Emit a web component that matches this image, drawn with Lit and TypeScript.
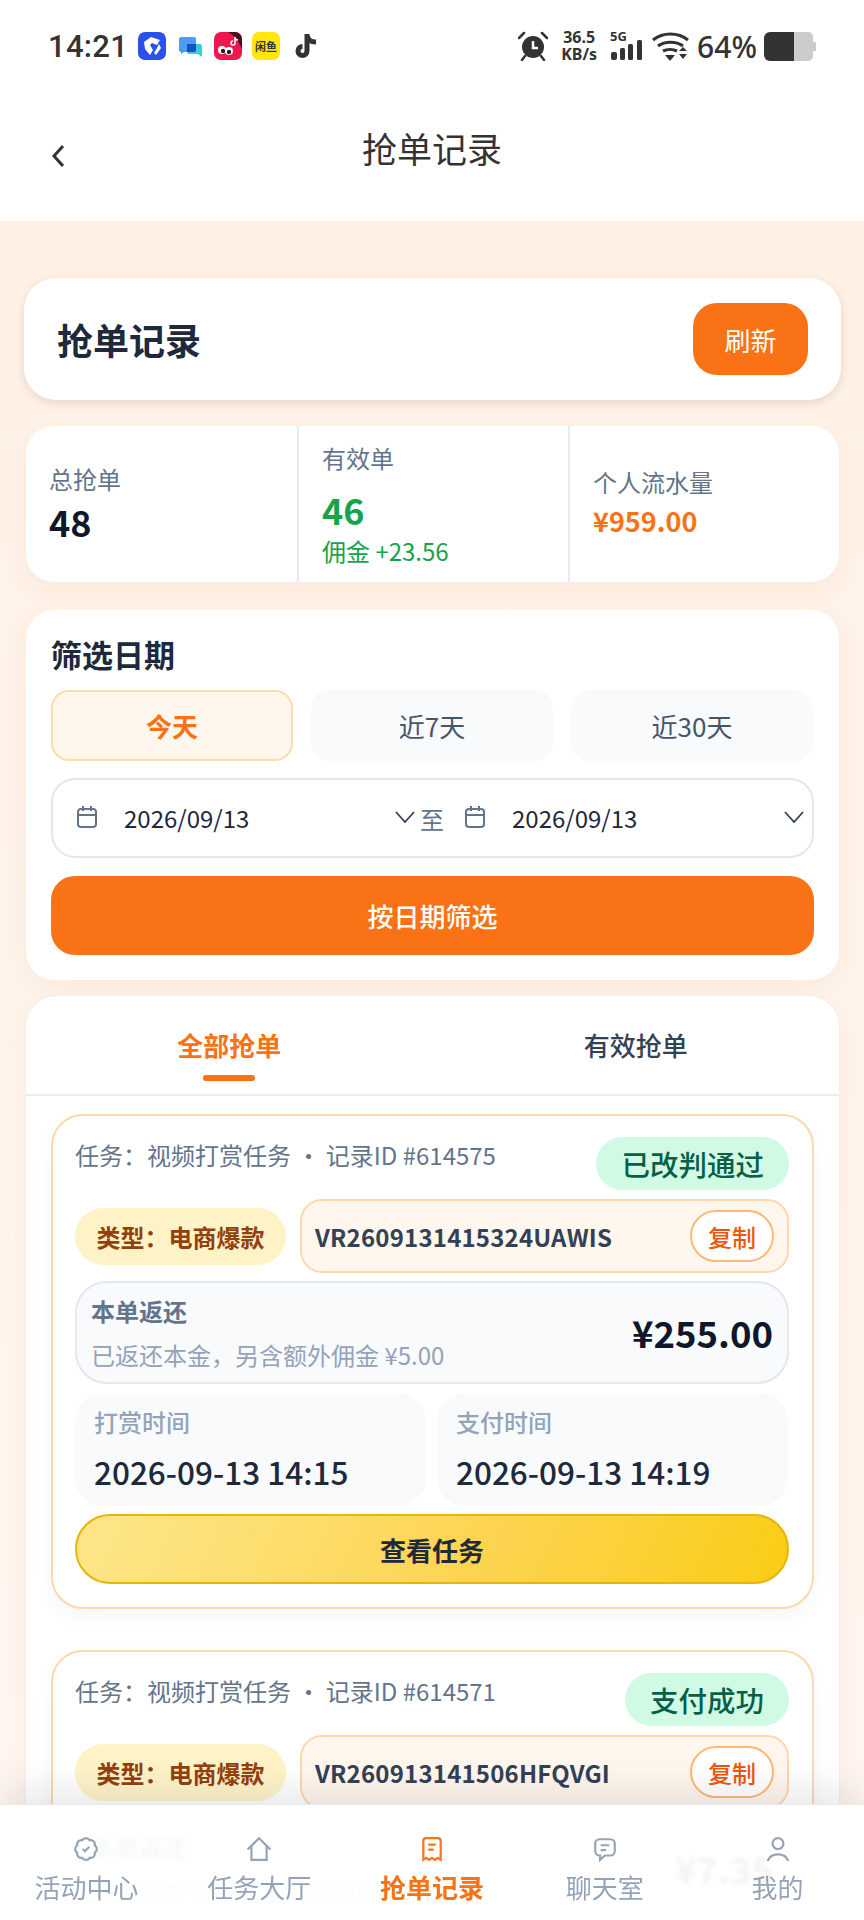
import { LitElement, css, html, svg } from "lit";
import { customElement } from "lit/decorators.js";

const orders = [
  {
    id: "614575",
    status: "已改判通过",
    no: "VR2609131415324UAWIS",
    note: "已返还本金，另含额外佣金 ¥5.00",
    amount: "¥255.00",
    paidAt: "2026-09-13 14:15",
    doneAt: "2026-09-13 14:19",
  },
  {
    id: "614571",
    status: "支付成功",
    no: "VR260913141506HFQVGI",
    note: "已返还本金，另含额外佣金 ¥0.35",
    amount: "¥7.35",
    paidAt: "2026-09-13 14:15",
    doneAt: "2026-09-13 14:16",
  },
];

const tabIcons = {
  badge: svg`<path d="M3.85 8.62a4 4 0 0 1 4.78-4.77 4 4 0 0 1 6.74 0 4 4 0 0 1 4.78 4.78 4 4 0 0 1 0 6.74 4 4 0 0 1-4.77 4.78 4 4 0 0 1-6.75 0 4 4 0 0 1-4.78-4.77 4 4 0 0 1 0-6.76Z"/><path d="m9 12 2 2 4-4"/>`,
  home: svg`<path d="M1.5 12.5 12 2l10.500 10.500"/><path d="M5 9v13h14V9"/>`,
  receipt: svg`<path d="M4 4.500A2.500 2.500 0 0 1 6.500 2h11A2.500 2.500 0 0 1 20 4.500V22l-2.700-1.800L14.700 22 12 20.200 9.300 22l-2.600-1.800L4 22Z"/><path d="M8.500 8h7M8.500 12.500h5"/>`,
  chat: svg`<path d="M7 3h10a4 4 0 0 1 4 4v7a4 4 0 0 1-4 4h-5l-4.500 4v-4H7a4 4 0 0 1-4-4V7a4 4 0 0 1 4-4Z"/><path d="M8 8.500h8M8 13h5"/>`,
  user: svg`<circle cx="12" cy="7" r="5"/><path d="M2.500 23c1.500-4 5-6 9.500-6s8 2 9.500 6"/>`,
};

const tabs = [
  { label: "活动中心", icon: tabIcons.badge },
  { label: "任务大厅", icon: tabIcons.home },
  { label: "抢单记录", icon: tabIcons.receipt, active: true },
  { label: "聊天室", icon: tabIcons.chat },
  { label: "我的", icon: tabIcons.user },
];

const calendar = html`<svg class="cal" viewBox="0 0 22 24" fill="none" stroke="currentColor" stroke-width="2">
  <rect x="2" y="4" width="18" height="18" rx="3" /><path d="M2 10h18M7 1v5M15 1v5" />
</svg>`;

const chevron = html`<svg class="chev" viewBox="0 0 20 12" fill="none" stroke="currentColor" stroke-width="1.800">
  <path d="M1 1l9 10 9-10" />
</svg>`;

@customElement("app-root")
export class AppRoot extends LitElement {
  static styles = css`
    :host {
      display: block;
      position: relative;
      width: 864px;
      height: 1920px;
      overflow: hidden;
      font-family: "Noto Sans CJK SC", "Noto Sans", sans-serif;
      background: linear-gradient(180deg, #fef0e4 0%, #fff3e9 50%, #fff6f0 100%);
      color: #1f2937;
    }
    * {
      box-sizing: border-box;
    }
    .top {
      background: #fff;
      height: 221px;
    }
    .status {
      height: 70px;
      padding: 22px 48px 0 48px;
      display: flex;
      align-items: center;
      color: #333;
    }
    .clock {
      font-family: Roboto, sans-serif;
      font-size: 31px;
      font-weight: 500;
      width: 90px;
      letter-spacing: 0.3px;
    }
    .apps {
      display: flex;
      align-items: center;
      gap: 10px;
    }
    .app {
      width: 28px;
      height: 28px;
      display: block;
    }
    .xianyu {
      width: 28px;
      height: 28px;
      border-radius: 7px;
      background: #ffe60f;
      color: #333;
      font-size: 11px;
      font-weight: 700;
      line-height: 28px;
      text-align: center;
      white-space: nowrap;
      overflow: hidden;
    }
    .sys {
      margin-left: auto;
      display: flex;
      align-items: center;
    }
    .speed {
      width: 36px;
      margin: 0 13px 0 13px;
      font-family: "Noto Sans", sans-serif;
      font-size: 16px;
      font-weight: 700;
      line-height: 17px;
      text-align: center;
      white-space: nowrap;
    }
    .signal {
      position: relative;
      width: 34px;
      height: 30px;
    }
    .signal span {
      position: absolute;
      left: 0;
      top: -4px;
      font-family: "Noto Sans", sans-serif;
      font-size: 13px;
      font-weight: 700;
    }
    .pct {
      font-family: "Noto Sans", sans-serif;
      font-size: 30px;
      font-weight: 500;
      margin: 0 7px 0 8px;
      white-space: nowrap;
    }
    .nav {
      height: 151px;
      display: grid;
      grid-template-columns: 1fr auto 1fr;
      align-items: center;
      padding: 0 51px;
    }
    .nav h1 {
      margin: 4px 0 0;
      font-size: 35px;
      font-weight: 400;
      line-height: 50px;
      color: #333;
    }
    .back {
      width: 14px;
      height: 24px;
      margin-top: 20px;
      display: block;
    }
    .page {
      padding: 57px 25px 0 26px;
    }
    .card {
      background: #fff;
      border-radius: 28px;
      box-shadow: 0 8px 24px rgba(180, 110, 50, 0.06);
    }
    .head {
      margin: 0 -2px 26px -2px;
      height: 122px;
      display: flex;
      align-items: center;
      justify-content: space-between;
      padding: 0 33px 0 33px;
      border-radius: 32px;
      box-shadow: 0 3px 10px rgba(120, 70, 30, 0.16);
    }
    .head h2 {
      margin: 0;
      font-size: 36px;
      font-weight: 700;
      color: #1e293b;
    }
    .refresh {
      width: 115px;
      height: 72px;
      border-radius: 24px;
      background: #f97316;
      color: #fff;
      font-size: 26px;
      display: flex;
      align-items: center;
      justify-content: center;
    }
    .stats {
      height: 156px;
      display: grid;
      grid-template-columns: 271px 271px 1fr;
      margin-bottom: 28px;
    }
    .stat {
      display: flex;
      flex-direction: column;
      justify-content: center;
      padding-left: 23px;
      border-left: 2px solid #e8eaee;
    }
    .stat:first-child {
      border-left: 0;
    }
    .stat .k {
      font-size: 24px;
      line-height: 34px;
      color: #64748b;
    }
    .stat .v {
      font-size: 36px;
      font-weight: 700;
      line-height: 50px;
      color: #0f172a;
    }
    .stat.good .k {
      margin-bottom: 10px;
    }
    .stat.good .v {
      color: #16a34a;
      line-height: 49px;
    }
    .stat.good .sub {
      font-size: 24px;
      line-height: 34px;
      color: #16a34a;
    }
    .stat .v.money {
      font-size: 27px;
      line-height: 44px;
      color: #f97316;
    }
    .filter {
      padding: 22px 25px 25px;
      margin-bottom: 15px;
    }
    .filter h3 {
      margin: 0 0 14px;
      font-size: 31px;
      font-weight: 700;
      line-height: 44px;
      color: #1e293b;
    }
    .presets {
      display: grid;
      grid-template-columns: repeat(3, 242px);
      gap: 18px;
      margin-bottom: 17px;
    }
    .preset {
      height: 71px;
      border-radius: 18px;
      background: #f8fafc;
      color: #475569;
      font-size: 26px;
      display: flex;
      align-items: center;
      justify-content: center;
    }
    .preset.on {
      background: #fff7ed;
      border: 2px solid #fbdcae;
      color: #f97316;
      font-weight: 700;
    }
    .dates {
      height: 80px;
      border: 2px solid #e5e7eb;
      border-radius: 24px;
      display: grid;
      grid-template-columns: 362px 29px 1fr;
      align-items: center;
      padding: 0 8px 2px 0;
      margin-bottom: 18px;
    }
    .date {
      display: flex;
      align-items: center;
      font-size: 24px;
      color: #1e293b;
      padding-left: 23px;
    }
    .date.end {
      padding-left: 20px;
    }
    .cal {
      width: 22px;
      height: 24px;
      color: #64748b;
      margin-right: 26px;
      flex: none;
    }
    .chev {
      width: 20px;
      height: 12px;
      margin-left: auto;
      color: #334155;
    }
    .to {
      font-size: 24px;
      color: #64748b;
      text-align: right;
      margin-top: 2px;
    }
    .apply {
      height: 79px;
      border-radius: 24px;
      background: #f97316;
      color: #fff;
      font-size: 26px;
      font-weight: 500;
      display: flex;
      align-items: center;
      justify-content: center;
    }
    .list {
      padding: 0 25px;
      border: 1px solid #edf0f5;
      border-bottom: 0;
      margin: 0 -1px 0 -1px;
      border-radius: 32px 32px 0 0;
    }
    .list-tabs {
      margin: 0 -25px 18px;
      height: 100px;
      display: grid;
      grid-template-columns: 1fr 1fr;
      border-bottom: 2px solid #e8ebf0;
    }
    .list-tab {
      display: flex;
      flex-direction: column;
      align-items: center;
      padding-top: 29px;
      font-size: 26px;
      font-weight: 500;
      line-height: 40px;
      color: #334155;
    }
    .list-tab.on {
      color: #f97316;
      font-weight: 700;
    }
    .list-tab.on::after {
      content: "";
      width: 52px;
      height: 6px;
      border-radius: 3px;
      background: #f97316;
      margin-top: 10px;
    }
    .order {
      border: 2px solid #fbd9ad;
      border-radius: 32px;
      padding: 21px 23px 23px 22px;
      margin-bottom: 41px;
      background: #fff;
      box-shadow: 0 8px 20px rgba(15, 23, 42, 0.04);
    }
    .row1 {
      display: flex;
      align-items: flex-start;
      justify-content: space-between;
      margin-bottom: 9px;
    }
    .meta {
      font-size: 24px;
      line-height: 36px;
      color: #64748b;
      white-space: nowrap;
    }
    .state {
      height: 53px;
      padding: 0 25px;
      border-radius: 27px;
      background: #d1fae5;
      color: #065f46;
      font-size: 28.500px;
      font-weight: 500;
      display: flex;
      align-items: center;
    }
    .row2 {
      display: flex;
      align-items: center;
      gap: 14px;
      margin-bottom: 8px;
    }
    .type {
      flex: none;
      width: 211px;
      height: 57px;
      border-radius: 29px;
      background: #fef3c7;
      color: #92400e;
      font-size: 24px;
      font-weight: 700;
      display: flex;
      align-items: center;
      justify-content: center;
      white-space: nowrap;
    }
    .no-box {
      flex: 1;
      height: 74px;
      border: 2px solid #fed7aa;
      border-radius: 22px;
      background: #fff7ed;
      display: flex;
      align-items: center;
      justify-content: space-between;
      padding: 0 13px;
    }
    .no {
      font-size: 24px;
      font-weight: 700;
      letter-spacing: 0.2px;
      color: #334155;
    }
    .copy {
      width: 84px;
      height: 52px;
      border: 2px solid #fdba74;
      border-radius: 26px;
      background: #fff;
      color: #ea580c;
      font-size: 24px;
      font-weight: 500;
      display: flex;
      align-items: center;
      justify-content: center;
    }
    .back-box {
      height: 103px;
      border: 2px solid #e2e8f0;
      border-radius: 32px;
      background: #f8fafc;
      display: flex;
      align-items: center;
      justify-content: space-between;
      padding: 0 14px;
      margin-bottom: 9px;
    }
    .back-box b {
      display: block;
      font-size: 24px;
      font-weight: 700;
      line-height: 34px;
      color: #64748b;
      margin-bottom: 10px;
    }
    .back-box small {
      display: block;
      font-size: 24px;
      line-height: 34px;
      color: #94a3b8;
    }
    .amount {
      font-size: 36.500px;
      font-weight: 700;
      color: #0f172a;
    }
    .times {
      display: grid;
      grid-template-columns: 351px 351px;
      gap: 11px;
      margin-bottom: 8px;
    }
    .time {
      height: 113px;
      border-radius: 28px;
      background: #f8fafc;
      padding: 11px 19px;
    }
    .time .k {
      font-size: 24px;
      font-weight: 500;
      line-height: 36px;
      color: #94a3b8;
      margin-bottom: 13px;
    }
    .time .v {
      font-size: 31.500px;
      font-weight: 500;
      line-height: 36px;
      color: #1e293b;
      white-space: nowrap;
    }
    .view {
      height: 70px;
      border: 2px solid #eab308;
      border-radius: 35px;
      background: linear-gradient(115deg, #fde68a 0%, #fcd34d 60%, #facc15 100%);
      color: #1f2937;
      font-size: 26px;
      font-weight: 700;
      display: flex;
      align-items: center;
      justify-content: center;
    }
    .tabbar {
      position: absolute;
      left: 0;
      right: 0;
      bottom: 0;
      height: 116px;
      display: grid;
      grid-template-columns: repeat(5, 1fr);
      background: rgba(255, 255, 255, 0.95);
      backdrop-filter: blur(2px);
      border-top: 1px solid #e7e9ee;
      box-shadow: 0 -12px 36px rgba(15, 23, 42, 0.1);
      padding-top: 31px;
    }
    .tab {
      display: flex;
      flex-direction: column;
      align-items: center;
      color: #94a3b8;
      font-size: 26px;
      line-height: 36px;
    }
    .tab svg {
      width: 26px;
      height: 26px;
      margin-bottom: 7px;
    }
    .tab.on {
      color: #f97316;
      font-weight: 700;
    }
  `;

  renderStatus() {
    return html`<div class="status">
      <div class="clock">14:21</div>
      <div class="apps">
        <svg class="app" viewBox="0 0 28 28">
          <rect width="28" height="28" rx="7" fill="#2a50ee" />
          <path d="M6 10l7-5 9 3-3 5-5-2-2 2 3 5-3 5-5-6zM21 12l2 4-5 7-2-2 3-5z" fill="#fff" />
        </svg>
        <svg class="app" viewBox="0 0 28 28">
          <rect width="28" height="28" rx="6" fill="#fff" />
          <path d="M3 7a2 2 0 0 1 2-2h13a2 2 0 0 1 2 2v11a2 2 0 0 1-2 2H8l-3 2v-2a2 2 0 0 1-2-2z" fill="#4a9cf5" />
          <path d="M11 12h13a2 2 0 0 1 2 2v11l-4-3H13a2 2 0 0 1-2-2z" fill="#2fd0e0" />
          <path d="M11 12h9v6a2 2 0 0 1-2 2h-7z" fill="#1c4fc4" />
        </svg>
        <svg class="app" viewBox="0 0 28 28">
          <rect width="28" height="28" rx="7" fill="#f0164f" />
          <path d="M14 0h7a7 7 0 0 1 7 7v10C24 8 20 3 14 0z" fill="#4a1020" />
          <circle cx="8" cy="18" r="4" fill="#fff" /><circle cx="15" cy="19" r="4" fill="#fff" />
          <circle cx="9" cy="19" r="2.200" fill="#222" /><circle cx="15" cy="20" r="2.200" fill="#222" />
          <path d="M21 5v6a2 2 0 1 1-2-2M21 5c0 2 1 3 3 3" fill="none" stroke="#fff" stroke-width="1.500" />
        </svg>
        <div class="xianyu">闲鱼</div>
        <svg class="app" style="margin-left:2px" viewBox="0 0 26 28">
          <path
            d="M14 2v17a4.500 4.500 0 1 1-4.500-4.500M14 2c0 5 3 8 9 8"
            fill="none"
            stroke="#333"
            stroke-width="5"
          />
        </svg>
      </div>
      <div class="sys">
        <svg width="30" height="30" viewBox="0 0 30 30">
          <circle cx="15" cy="16" r="11" fill="#333" />
          <path d="M15 10v7h5" fill="none" stroke="#fff" stroke-width="2.500" />
          <path
            d="M1 7l5-5M29 7l-5-5M7 25l-3 4M23 25l3 4"
            fill="none"
            stroke="#333"
            stroke-width="2.500"
            stroke-linecap="round"
          />
        </svg>
        <div class="speed">36.5<br />KB/s</div>
        <div class="signal">
          <span>5G</span>
          <svg width="34" height="30" viewBox="0 0 34 30">
            <g fill="#333">
              <rect x="1" y="21" width="6" height="8" rx="2" />
              <rect x="10" y="17" width="5" height="12" rx="1.500" />
              <rect x="18" y="13" width="5" height="16" rx="1.500" />
              <rect x="27" y="9" width="5" height="20" rx="1.500" />
            </g>
          </svg>
        </div>
        <svg style="margin-left:8px" width="37" height="30" viewBox="0 0 37 30">
          <g fill="none" stroke="#333" stroke-width="3.200">
            <path d="M1 9c10-8 25-8 35 0" />
            <path d="M6 15c7-5 18-5 25 0" />
            <path d="M11 20c4-2 10-2 14 0" />
          </g>
          <path d="M13 24h10l-5 6zM27 20h8l-4-4zM27 23h8l-4 5z" fill="#333" />
        </svg>
        <div class="pct">64%</div>
        <svg width="52" height="29" viewBox="0 0 52 29">
          <path d="M36 0h8a5 5 0 0 1 5 5v5h3v9h-3v5a5 5 0 0 1-5 5h-8z" fill="#ccc" />
          <path d="M6 0h24v29H6a6 6 0 0 1-6-6V6a6 6 0 0 1 6-6z" fill="#333" />
          <rect x="30" width="6" height="29" fill="#ccc" />
        </svg>
      </div>
    </div>`;
  }

  renderOrder(o: (typeof orders)[number]) {
    return html`<div class="order">
      <div class="row1">
        <div class="meta">任务：视频打赏任务 ・ 记录ID #${o.id}</div>
        <div class="state">${o.status}</div>
      </div>
      <div class="row2">
        <div class="type">类型：电商爆款</div>
        <div class="no-box">
          <span class="no">${o.no}</span>
          <span class="copy">复制</span>
        </div>
      </div>
      <div class="back-box">
        <div>
          <b>本单返还</b>
          <small>${o.note}</small>
        </div>
        <div class="amount">${o.amount}</div>
      </div>
      <div class="times">
        <div class="time">
          <div class="k">打赏时间</div>
          <div class="v">${o.paidAt}</div>
        </div>
        <div class="time">
          <div class="k">支付时间</div>
          <div class="v">${o.doneAt}</div>
        </div>
      </div>
      <div class="view">查看任务</div>
    </div>`;
  }

  render() {
    return html`
      <div class="top">
        ${this.renderStatus()}
        <div class="nav">
          <svg class="back" viewBox="0 0 14 24" fill="none" stroke="#333" stroke-width="3">
            <path d="M12 2L3 12l9 10" />
          </svg>
          <h1>抢单记录</h1>
        </div>
      </div>
      <div class="page">
        <div class="card head">
          <h2>抢单记录</h2>
          <div class="refresh">刷新</div>
        </div>
        <div class="card stats">
          <div class="stat">
            <div class="k">总抢单</div>
            <div class="v">48</div>
          </div>
          <div class="stat good">
            <div class="k">有效单</div>
            <div class="v">46</div>
            <div class="sub">佣金 +23.56</div>
          </div>
          <div class="stat">
            <div class="k">个人流水量</div>
            <div class="v money">¥959.00</div>
          </div>
        </div>
        <div class="card filter">
          <h3>筛选日期</h3>
          <div class="presets">
            <div class="preset on">今天</div>
            <div class="preset">近7天</div>
            <div class="preset">近30天</div>
          </div>
          <div class="dates">
            <div class="date">${calendar}2026/09/13${chevron}</div>
            <div class="to">至</div>
            <div class="date end">${calendar}2026/09/13${chevron}</div>
          </div>
          <div class="apply">按日期筛选</div>
        </div>
        <div class="card list">
          <div class="list-tabs">
            <div class="list-tab on">全部抢单</div>
            <div class="list-tab">有效抢单</div>
          </div>
          ${orders.map((o) => this.renderOrder(o))}
        </div>
      </div>
      <div class="tabbar">
        ${tabs.map(
          (t) => html`<div class="tab ${t.active ? "on" : ""}">
            <svg viewBox="0 0 24 24" fill="none" stroke="currentColor" stroke-width="2">${t.icon}</svg>
            ${t.label}
          </div>`,
        )}
      </div>
    `;
  }
}
